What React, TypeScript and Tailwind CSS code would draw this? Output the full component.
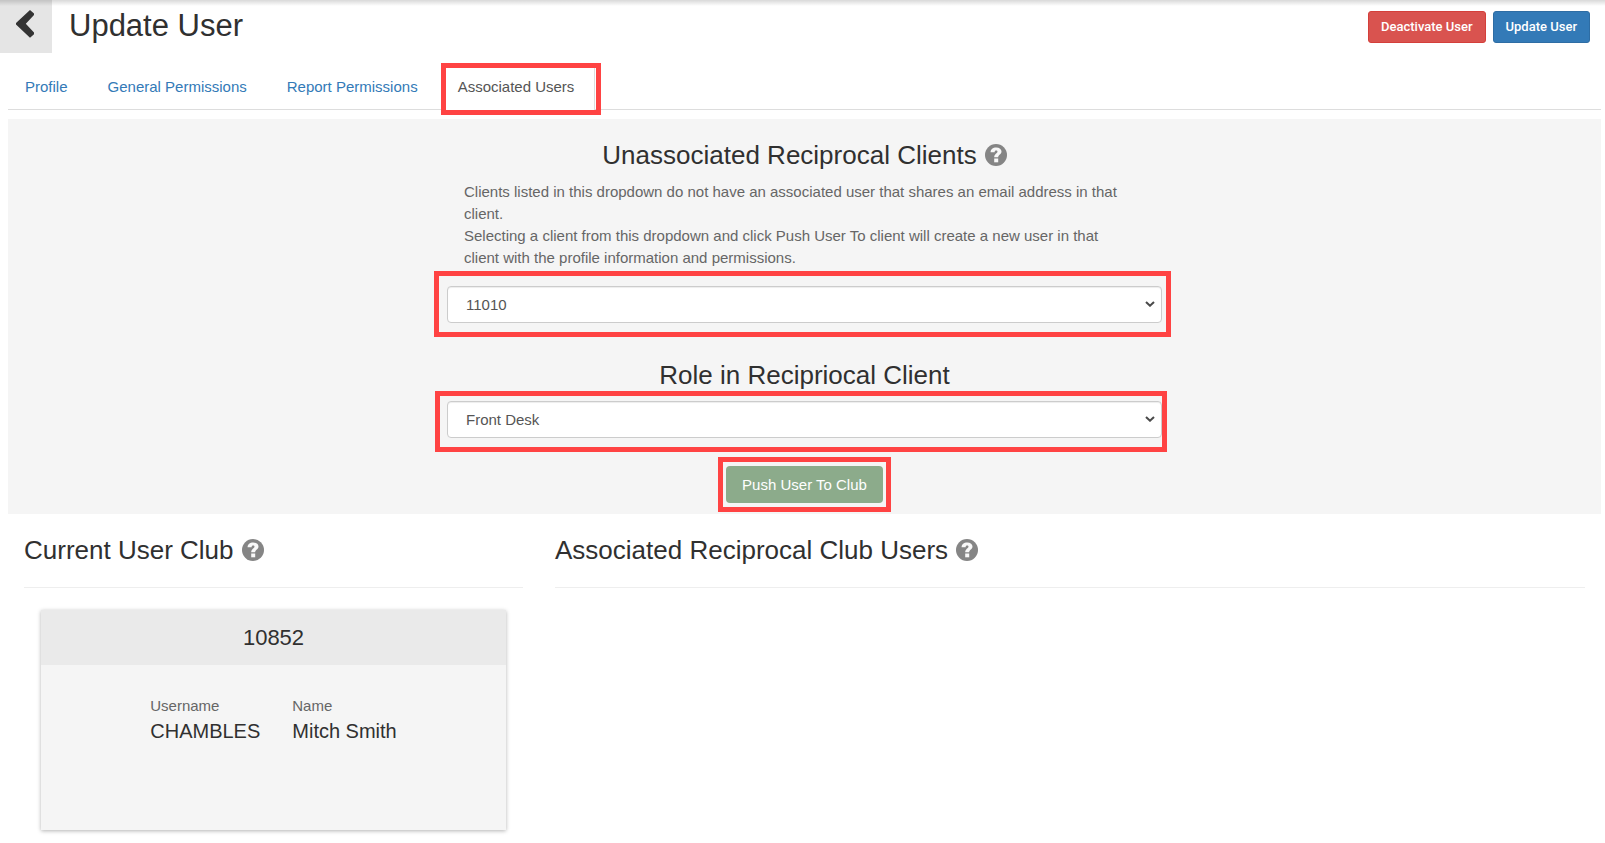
import type { ReactNode } from "react";

function HelpIcon() {
  return (
    <button type="button" aria-label="Help" className="ml-2 block shrink-0 rounded-full">
      <svg viewBox="0 0 22 22" className="block size-[22px]" aria-hidden="true">
        <circle cx="11" cy="11" r="11" fill="#858585" />
        <path
          d="M5.600 8.200C5.600 5 7.900 3.400 11.200 3.400C14.400 3.400 16.500 5.100 16.500 7.600C16.500 10.500 13.200 10.900 13.200 13.200H9.200C9.200 9.900 12.500 9.500 12.500 7.800C12.500 7 12 6.600 11.200 6.600C10.200 6.600 9.600 7.200 9.600 8.200Z"
          fill="#f8f8f8"
        />
        <rect x="9.200" y="14.500" width="4" height="3.800" fill="#f8f8f8" />
      </svg>
    </button>
  );
}

function Highlight({ className }: { className: string }) {
  return (
    <span
      aria-hidden="true"
      className={`pointer-events-none absolute border-5 border-[#ff4343] ${className}`}
    />
  );
}

function SectionTitle({ children, help = true }: { children: ReactNode; help?: boolean }) {
  return (
    <div className="flex items-center">
      <h3 className="text-[26px] leading-[30px] text-[#303030]">{children}</h3>
      {help && <HelpIcon />}
    </div>
  );
}

function SelectField({ label, options, highlight }: { label: string; options: string[]; highlight: string }) {
  return (
    <div className="relative">
      <select
        aria-label={label}
        className="block h-[37px] w-full appearance-none rounded border border-[#cccccc] bg-white px-[18px] text-[15px] text-[#555555] shadow-[inset_0_1px_1px_rgba(0,0,0,0.075)]"
      >
        {options.map((option) => (
          <option key={option}>{option}</option>
        ))}
      </select>
      <svg
        viewBox="0 0 10 6"
        className="pointer-events-none absolute top-[15px] right-[7px] h-1.5 w-2.5"
        aria-hidden="true"
      >
        <path d="M1 0.900L5 4.700L9 0.900" fill="none" stroke="#4a4a4a" strokeWidth="2" />
      </svg>
      <Highlight className={highlight} />
    </div>
  );
}

const tabs = ["Profile", "General Permissions", "Report Permissions"];

export default function App() {
  return (
    <div className="min-h-screen bg-white font-['Liberation_Sans',Arial,sans-serif] text-[15px] leading-[22px] text-[#666666]">
      <header className="relative flex items-start">
        <div
          aria-hidden="true"
          className="pointer-events-none absolute inset-x-0 top-0 h-1.5 bg-linear-to-b from-black/15 to-transparent"
        />
        <button
          type="button"
          aria-label="Back"
          className="flex h-[53px] w-[52px] shrink-0 items-start bg-[#e5e5e5] pt-2.5 pl-4"
        >
          <svg viewBox="0 0 18 28" className="block h-7 w-[18px]" aria-hidden="true">
            <path d="M14 0L18 3.400V5L9.800 13.800L18 22.600V24.200L14 27.800L0 14.600V13Z" fill="#333333" />
          </svg>
        </button>
        <h1 className="ml-[17px] pt-2 text-[31px] leading-9 text-[#303030]">Update User</h1>
        <div className="mt-[11px] mr-[15px] ml-auto flex gap-[7px] font-['Roboto',sans-serif] text-[13px] font-medium text-white">
          <button type="button" className="h-8 rounded-[3px] border border-[#d43f3a] bg-[#d9534f] px-3">
            Deactivate User
          </button>
          <button type="button" className="h-8 rounded-[3px] border border-[#2e6da4] bg-[#337ab7] px-3">
            Update User
          </button>
        </div>
      </header>

      <main className="mr-1 ml-2 pt-3">
        <nav className="flex gap-1.5 border-b border-[#dddddd]">
          {tabs.map((tab) => (
            <a key={tab} href="#" className="px-[17px] py-[11px] text-[#337ab7]">
              {tab}
            </a>
          ))}
          <a
            href="#"
            aria-current="page"
            className="relative -mb-px border-r border-[#dddddd] bg-white pt-[11px] pr-5 pb-3 pl-[17px] text-[#555555]"
          >
            Associated Users
            <Highlight className="-top-0.5 -right-[7px] -bottom-[5px] left-0" />
          </a>
        </nav>

        <section className="mt-[9px] flex flex-col items-center bg-[#f5f5f5] pt-[21px] pb-[11px]">
          <SectionTitle>Unassociated Reciprocal Clients</SectionTitle>
          <div className="w-[715px] max-w-full">
            <p className="mt-[11px] pr-8 pl-[17px]">
              Clients listed in this dropdown do not have an associated user that shares an email address in that
              client.
              <br />
              Selecting a client from this dropdown and click Push User To client will create a new user in that
              client with the profile information and permissions.
            </p>
            <div className="mt-[17px]">
              <SelectField
                label="Unassociated Reciprocal Clients"
                options={["11010"]}
                highlight="-top-[15px] -right-[9px] -bottom-3.5 -left-[13px]"
              />
            </div>
            <div className="mt-[37px] flex justify-center">
              <SectionTitle help={false}>Role in Recipriocal Client</SectionTitle>
            </div>
            <div className="mt-[11px]">
              <SelectField
                label="Role in Recipriocal Client"
                options={["Front Desk"]}
                highlight="-top-2.5 -right-[5px] -bottom-3.5 -left-3"
              />
            </div>
          </div>
          <div className="relative mt-7">
            <button type="button" className="block h-[37px] rounded bg-[#8cab8b] px-4 text-white">
              Push User To Club
            </button>
            <Highlight className="-inset-x-2 -inset-y-[9px]" />
          </div>
        </section>

        <div className="grid grid-cols-3">
          <section className="px-4 pt-[21px]">
            <SectionTitle>Current User Club</SectionTitle>
            <hr className="mt-[22px] border-[#eeeeee]" />
            <article className="mx-[17px] mt-[22px] min-h-[220px] bg-[#f5f5f5] shadow-[0_1px_4px_rgba(0,0,0,0.3)]">
              <h4 className="bg-[#eaeaea] py-[15px] text-center text-[22px] leading-[25px] text-[#303030]">10852</h4>
              <dl className="flex justify-center gap-8 pt-[30px]">
                <div>
                  <dt>Username</dt>
                  <dd className="mt-0.5 text-xl leading-6 text-[#303030]">CHAMBLES</dd>
                </div>
                <div>
                  <dt>Name</dt>
                  <dd className="mt-0.5 text-xl leading-6 text-[#303030]">Mitch Smith</dd>
                </div>
              </dl>
            </article>
          </section>
          <section className="col-span-2 px-4 pt-[21px]">
            <SectionTitle>Associated Reciprocal Club Users</SectionTitle>
            <hr className="mt-[22px] border-[#eeeeee]" />
          </section>
        </div>
      </main>
    </div>
  );
}
